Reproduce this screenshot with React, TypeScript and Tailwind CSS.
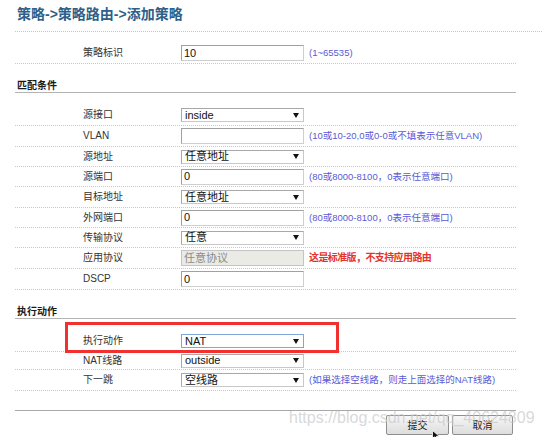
import React from "react";

const FONT = "font-['Liberation_Sans','Noto_Sans_CJK_SC',sans-serif]";

function Arrow() {
  return (
    <svg width="6" height="5" viewBox="0 0 6 5" className="shrink-0">
      <path d="M0 0 L6 0 L3 5 Z" fill="#111" />
    </svg>
  );
}

function Select({ value, focus = false }: { value: string; focus?: boolean }) {
  return (
    <div
      className={
        "flex h-[14px] w-[123px] items-center justify-between bg-white pl-[3px] pr-[4px] text-[11px] leading-none text-[#111] border " +
        (focus ? "border-[#7fa6d8]" : "border-t-[#a8a8a8] border-l-[#a8a8a8] border-r-[#c8c8c8] border-b-[#c8c8c8]")
      }
    >
      <span>{value}</span>
      <Arrow />
    </div>
  );
}

function Input({ value, disabled = false }: { value: string; disabled?: boolean }) {
  return (
    <div
      className={
        "flex h-[16px] w-[123px] items-center pl-[2px] text-[11px] leading-none border " +
        (disabled
          ? "bg-[#ebebe6] text-[#8a8a8a] border-[#c4c4c4]"
          : "bg-white text-[#111] border-t-[#a0a0a0] border-l-[#a0a0a0] border-r-[#cfcfcf] border-b-[#cfcfcf]")
      }
    >
      {value}
    </div>
  );
}

function Row({
  label,
  children,
  hint,
  red = false,
  h,
}: {
  label: string;
  children: React.ReactNode;
  hint?: string;
  red?: boolean;
  h: string;
}) {
  return (
    <div className={"flex items-center border-b border-dotted border-[#c8c8c8] " + h}>
      <div className="w-[166px] shrink-0 pl-[68px] text-[10px] leading-none text-[#333]">{label}</div>
      {children}
      {hint && (
        <span
          className={
            "ml-[5px] leading-none " +
            (red ? "text-[10px] font-bold text-[#e4332a] tracking-[-0.6px]" : "text-[9.5px] text-[#5a5ad6]")
          }
        >
          {hint}
        </span>
      )}
    </div>
  );
}

function Heading({ text }: { text: string }) {
  return (
    <div className="flex h-[29px] items-end border-b border-[#b4b4b4] pl-[2px] pb-[1px]">
      <span className="text-[10px] font-bold leading-[10px] text-[#1a1a1a]">{text}</span>
    </div>
  );
}

function Button({ text, w }: { text: string; w: string }) {
  return (
    <div
      className={
        "flex h-[20px] items-center justify-center rounded-[2px] border border-[#8e8e8e] bg-gradient-to-b from-[#f7f7f7] to-[#dddddd] text-[10px] text-[#222] " +
        w
      }
    >
      {text}
    </div>
  );
}

export default function App() {
  return (
    <div className={"relative h-[437px] w-[542px] overflow-hidden bg-white " + FONT}>
      {/* Title */}
      <div className="ml-[15px] flex h-[32px] items-start border-b border-dotted border-[#b9c7d6] pl-[2px] pt-[6px]">
        <span className="text-[14px] font-bold leading-[17px] text-[#2d5f8a]">策略-&gt;策略路由-&gt;添加策略</span>
      </div>

      <div className="ml-[15px] w-[501px]">
        <div className="h-[11px]" />
        <Row label="策略标识" hint="(1~65535)" h="h-[21px]">
          <Input value="10" />
        </Row>

        <Heading text="匹配条件" />
        <div className="h-[12px]" />
        <Row label="源接口" h="h-[21px]">
          <Select value="inside" />
        </Row>
        <Row label="VLAN" hint="(10或10-20,0或0-0或不填表示任意VLAN)" h="h-[21px]">
          <Input value="" />
        </Row>
        <Row label="源地址" h="h-[20px]">
          <Select value=" 任意地址" />
        </Row>
        <Row label="源端口" hint="(80或8000-8100，0表示任意端口)" h="h-[20px]">
          <Input value="0" />
        </Row>
        <Row label="目标地址" h="h-[21px]">
          <Select value=" 任意地址" />
        </Row>
        <Row label="外网端口" hint="(80或8000-8100，0表示任意端口)" h="h-[20px]">
          <Input value="0" />
        </Row>
        <Row label="传输协议" h="h-[20px]">
          <Select value=" 任意" />
        </Row>
        <Row label="应用协议" hint="这是标准版，不支持应用路由" red h="h-[21px]">
          <Input value="任意协议" disabled />
        </Row>
        <Row label="DSCP" h="h-[21px]">
          <Input value="0" />
        </Row>

        <Heading text="执行动作" />
        <div className="relative">
          <div className="h-[12px]" />
          <Row label="执行动作" h="h-[21px]">
            <Select value="NAT" focus />
          </Row>
          <Row label="NAT线路" h="h-[18px]">
            <Select value="outside" />
          </Row>
          <Row label="下一跳" hint="(如果选择空线路，则走上面选择的NAT线路)" h="h-[21px]">
            <Select value="空线路" />
          </Row>
          {/* red annotation box */}
          <div className="pointer-events-none absolute left-[50px] top-[3px] h-[31px] w-[274px] border-[3px] border-[#f0312f]" />
        </div>
        <div className="h-[20px] border-b border-[#a8a8a8]" />
        <div className="flex justify-end gap-[3px] pr-[3px] pt-[4px]">
          <Button text="提交" w="w-[63px]" />
          <Button text="取消" w="w-[61px]" />
        </div>
      </div>

      {/* watermark */}
      <div className="pointer-events-none absolute left-[289px] top-[408px] font-['Liberation_Sans',sans-serif] text-[16px] leading-[20px] text-[#c8c8c8]/70">
        https://blog.csdn.net/qq_40624809
      </div>
      {/* cursor */}
      <svg className="pointer-events-none absolute left-[432px] top-[430px]" width="8" height="10" viewBox="0 0 8 10">
        <path d="M0.5 0.5 L0.5 9 L2.8 6.8 L4.5 9.8 L5.8 9.2 L4.3 6.3 L7.3 6.3 Z" fill="#111" stroke="#fff" strokeWidth="0.8" />
      </svg>
    </div>
  );
}
